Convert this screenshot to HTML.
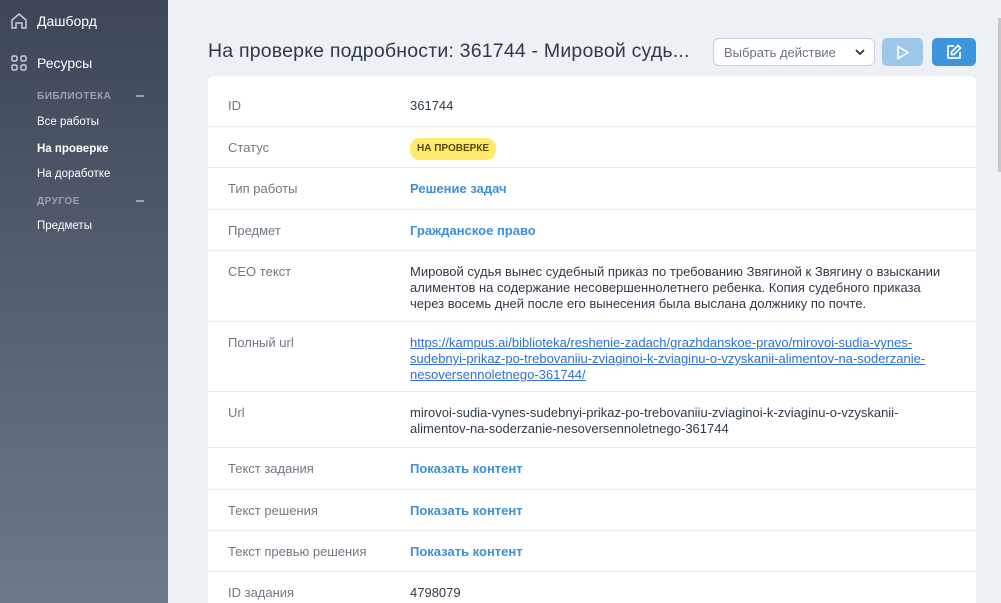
<!DOCTYPE html><html style="height:603px;overflow:hidden"><head><meta charset="utf-8"><style>
*{box-sizing:border-box;margin:0;padding:0}
body{width:1001px;height:603px;overflow:hidden;background:#edf0f4;font-family:"Liberation Sans",sans-serif;position:relative}
.sb{position:absolute;left:0;top:0;width:168px;height:603px;background:linear-gradient(#3d4656,#6e7988)}
.nav{position:absolute;left:37px;color:#fff;font-size:14px}
.sub{position:absolute;left:37px;color:#fff;font-size:11.5px}
.cap{position:absolute;left:37px;color:#9aa2ad;font-size:10px;font-weight:bold;letter-spacing:.5px}
.dash{position:absolute;left:136px;width:8px;height:2px;background:#9aa2ad}
h1{position:absolute;left:208px;top:40px;font-size:19.5px;font-weight:normal;color:#2f3a48;letter-spacing:.2px}
.sel{position:absolute;left:713px;top:38px;width:162px;height:28px;border:1px solid #c9cfd7;border-radius:6px;background:#fff;font-size:13px;color:#6b7380;padding:6px 10px}
.b1{position:absolute;left:882px;top:38px;width:41px;height:28px;border-radius:5px;background:#9cc6ea}
.b2{position:absolute;left:932px;top:38px;width:44px;height:28px;border-radius:5px;background:#3d95de}
.card{position:absolute;left:208px;top:76px;width:768px;height:527px;background:#fff;border-radius:6px 6px 0 0;overflow:hidden}
.r{position:absolute;left:0;width:768px;border-top:1px solid #e8ebef;font-size:13px}
.l{position:absolute;left:20px;color:#707884}
.v{position:absolute;left:202px;width:545px;color:#2f3a48;line-height:16px}
.a{color:#3d8fd8;font-weight:bold}
.u{color:#2f6fd0;text-decoration:underline;width:530px}
.badge{display:inline-block;background:#fde96a;color:#5b4a10;font-size:10px;font-weight:bold;padding:3px 7px;border-radius:10px}
</style></head><body>
<div class="sb">
<svg style="position:absolute;left:10px;top:12px" width="18" height="18" viewBox="0 0 18 18" fill="none" stroke="#c8ced6" stroke-width="1.5"><path d="M2 8L9 2l7 6v8h-4v-5H6v5H2z"/></svg>
<div class="nav" style="top:13px">Дашборд</div>
<svg style="position:absolute;left:11px;top:55px" width="16" height="16" viewBox="0 0 16 16" fill="none" stroke="#c8ced6" stroke-width="1.5"><rect x="1" y="1" width="5" height="5" rx="1.5"/><rect x="10" y="1" width="5" height="5" rx="1.5"/><rect x="1" y="10" width="5" height="5" rx="1.5"/><rect x="10" y="10" width="5" height="5" rx="1.5"/></svg>
<div class="nav" style="top:55px">Ресурсы</div>
<div class="cap" style="top:91px">БИБЛИОТЕКА</div><div class="dash" style="top:95px"></div>
<div class="sub" style="top:116px">Все работы</div>
<div class="sub" style="top:143px;font-weight:bold">На проверке</div>
<div class="sub" style="top:168px">На доработке</div>
<div class="cap" style="top:196px">ДРУГОЕ</div><div class="dash" style="top:200px"></div>
<div class="sub" style="top:220px">Предметы</div>
</div>
<h1>На проверке подробности: 361744 - Мировой судь...</h1>
<div class="sel">Выбрать действие<svg style="position:absolute;right:9px;top:10px" width="10" height="7" viewBox="0 0 10 7" fill="none" stroke="#333" stroke-width="1.8"><path d="M1 1l4 4 4-4"/></svg></div>
<div class="b1"><svg style="position:absolute;left:14px;top:7px" width="14" height="15" viewBox="0 0 14 15" fill="none" stroke="#fff" stroke-width="1.6"><path d="M2 1.5l10 6-10 6z"/></svg></div>
<div class="b2"><svg style="position:absolute;left:14px;top:6px" width="16" height="16" viewBox="0 0 16 16" fill="none" stroke="#fff" stroke-width="1.7"><path d="M8 2H2v12h12V8"/><path d="M12 1.5l2.5 2.5L8 10.5H5.5V8z"/></svg></div>
<div class="card">
<div class="r" style="top:0;border:none"><span class="l" style="top:22px">ID</span><span class="v" style="top:22px">361744</span></div>
<div class="r" style="top:50px"><span class="l" style="top:13px">Статус</span><span class="v" style="top:11px"><span class="badge">НА ПРОВЕРКЕ</span></span></div>
<div class="r" style="top:91px"><span class="l" style="top:13px">Тип работы</span><span class="v a" style="top:13px">Решение задач</span></div>
<div class="r" style="top:133px"><span class="l" style="top:13px">Предмет</span><span class="v a" style="top:13px">Гражданское право</span></div>
<div class="r" style="top:174px"><span class="l" style="top:13px">СЕО текст</span><span class="v" style="top:13px;width:540px">Мировой судья вынес судебный приказ по требованию Звягиной к Звягину о взыскании алиментов на содержание несовершеннолетнего ребенка. Копия судебного приказа через восемь дней после его вынесения была выслана должнику по почте.</span></div>
<div class="r" style="top:245px"><span class="l" style="top:13px">Полный url</span><span class="v u" style="top:13px">https://kampus.ai/biblioteka/reshenie-zadach/grazhdanskoe-pravo/mirovoi-sudia-vynes-sudebnyi-prikaz-po-trebovaniiu-zviaginoi-k-zviaginu-o-vzyskanii-alimentov-na-soderzanie-nesoversennoletnego-361744/</span></div>
<div class="r" style="top:315px"><span class="l" style="top:13px">Url</span><span class="v" style="top:13px;width:530px">mirovoi-sudia-vynes-sudebnyi-prikaz-po-trebovaniiu-zviaginoi-k-zviaginu-o-vzyskanii-alimentov-na-soderzanie-nesoversennoletnego-361744</span></div>
<div class="r" style="top:371px"><span class="l" style="top:13px">Текст задания</span><span class="v a" style="top:13px">Показать контент</span></div>
<div class="r" style="top:413px"><span class="l" style="top:13px">Текст решения</span><span class="v a" style="top:13px">Показать контент</span></div>
<div class="r" style="top:454px"><span class="l" style="top:13px">Текст превью решения</span><span class="v a" style="top:13px">Показать контент</span></div>
<div class="r" style="top:495px"><span class="l" style="top:13px">ID задания</span><span class="v" style="top:13px">4798079</span></div>
</div>
<div style="position:absolute;left:998px;top:18px;width:3px;height:154px;background:#c5c9ce"></div>
</body></html>
